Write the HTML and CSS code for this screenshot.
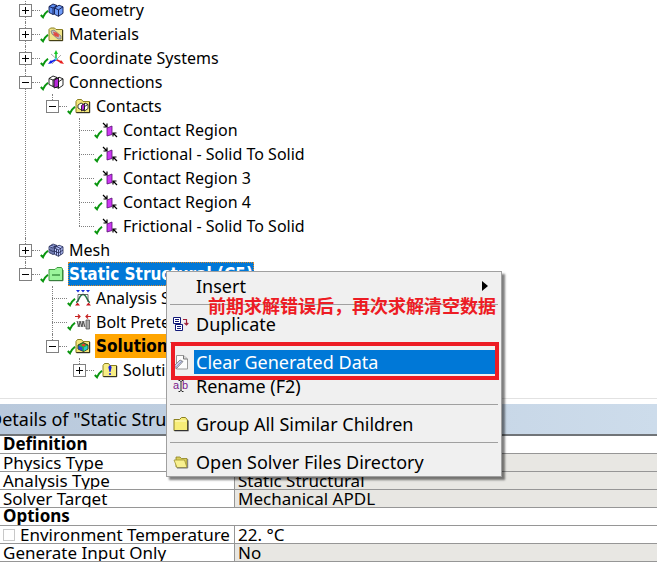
FILE: index.html
```html
<!DOCTYPE html>
<html lang="en">
<head>
<meta charset="utf-8">
<title>Outline</title>
<link rel="stylesheet" href="styles.css">
</head>
<body>
<svg class="sprite" aria-hidden="true">
  <symbol id="check" viewBox="0 0 9 9"><path d="M.8 5 3 7.200C4 4.800 5.800 2.400 8 .8" fill="none" stroke="#0a960f" stroke-width="2"/></symbol>
  <symbol id="geometry" viewBox="0 0 16 16"><g stroke="#10184a" stroke-width=".9" stroke-linejoin="round"><path d="M1 4.500 5 2l4 1.500v7L5 12.500 1 10.500z" fill="#5c8cf0"/><path d="M1 4.500 5 6l4-2.500M5 6v6.500" fill="none"/><path d="M6.500 6 11 3.200l4 1.600v6.500l-4.500 3-4-2z" fill="#6f9cf8"/><path d="m6.500 6 4 1.800L15 4.800M10.500 7.800v6.500" fill="none"/></g></symbol>
  <symbol id="materials" viewBox="0 0 16 16"><path d="M1 3.500 2.500 2h4L8 3.500h6.500v11H1z" fill="#f0e48a" stroke="#8b8020"/><path d="M1.500 14.700h13.200V4" fill="none" stroke="#333010"/><path d="m3 5 3-1 7 6v3h-3L4 8z" fill="#bdbdbd" stroke="#777" stroke-width=".7"/><path d="m5.500 6 5 5M7.500 6.500l3.500 3M5.500 8l3 2.500" stroke="#e14b42" stroke-width="1.200"/></symbol>
  <symbol id="axes" viewBox="0 0 16 16"><path d="m3 4 10 9M13 5l-9 9" stroke="#999" stroke-width=".8"/><path d="M8 9V2" stroke="#18b828" stroke-width="1.500"/><path d="M8 0 6 4h4z" fill="#18c828"/><path d="M8 9.500 2 12.500" stroke="#1020e8" stroke-width="1.600"/><path d="m0 14 3-4 1.500 3z" fill="#1020e8"/><path d="m8 9.500 6 3" stroke="#e82020" stroke-width="1.600"/><path d="m16 14-4.500-1L13 10z" fill="#e82020"/><circle cx="8" cy="9" r="1.300" fill="#42c8d8"/></symbol>
  <symbol id="connections" viewBox="0 0 16 16"><g stroke="#111" stroke-width=".9" stroke-linejoin="round"><path d="M1 4.500 5 2l4 1.500v7L5 12.500 1 10.500z" fill="#fff"/><path d="M1 4.500 5 6l4-2.500M5 6v6.500" fill="none"/><path d="M6.500 6 11 3.200l4 1.600v6.500l-4.500 3-4-2z" fill="#fff"/><path d="m6 6 4.500-2v8.500L6 14z" fill="#b62ad8"/><path d="m10.500 7.800L15 4.800M10.500 7.800v6.500" fill="none"/></g></symbol>
  <symbol id="contacts" viewBox="0 0 16 16"><path d="M1 3.500 2.500 1.500h4L8 3.500h6.500v11H1z" fill="#f4e77a" stroke="#8b8020"/><path d="M1.500 14.700h13.200V4" fill="none" stroke="#222"/><g stroke="#111" stroke-width=".8"><path d="m3 7 3-2 2 1v4l-2.500 1.500L3 10z" fill="#fff"/><path d="M7.500 7.500 10 5l3 1.500v4L9.500 13l-2-1z" fill="#fff"/><path d="m6.500 7.500 3-2V11l-3 2z" fill="#b62ad8"/><path d="m9.500 8.500 3.500-2M9.500 8.500V13"/></g></symbol>
  <symbol id="region" viewBox="0 0 16 16"><path d="m5 6 5-2v8.500L5 14z" fill="#cc38f2" stroke="#571070" stroke-width=".8"/><path d="m1 1 3.500 3.500M5 1.500V5H1.500M15 15l-3.500-3.500M11 14.500V11h3.500" fill="none" stroke="#000" stroke-width="1.200"/></symbol>
  <symbol id="mesh" viewBox="0 0 16 16"><g stroke="#20264f" stroke-width=".8"><path d="M1 4.500 5 2l4 1.500v7L5 12.500 1 10.500z" fill="#aab8f6"/><path d="M1 4.500 5 6l4-2.500M5 6v6.500M1 7.500l4 2 2-1M3 3.200l4 1.600M3 5.500v6M7 3v4" fill="none"/><path d="M6.500 6 11 3.200l4 1.600v6.500l-4.500 3-4-2z" fill="#b9c5ff"/><path d="m6.500 6 4 1.800L15 4.800M10.500 7.800v6.500M6.500 9l4 2L15 8M8.500 7v6.300M12.700 6v7M8.500 4.600l4 1.800" fill="none"/></g></symbol>
  <symbol id="static" viewBox="0 0 16 16"><path d="M1 3.500h6L9 1.500h4.500L14.500 3v11.500H1z" fill="#9bf59b" stroke="#3f9b3f"/><path d="M1.500 14.700h13.500V4" fill="none" stroke="#35783a"/><path d="M4 9h8" stroke="#287d30" stroke-width="1.200"/></symbol>
  <symbol id="settings" viewBox="0 0 16 16"><path d="M1 0h4L3 2.500zM6 0h4L8 2.500zM11 0h4l-2 2.500z" fill="#1530d8"/><path d="M0 15.500h5l-2.500-3zM11 15.500h5l-2.500-3z" fill="#c81820"/><path d="M1 12.500C4 12 4 4.500 8 4.500s4 7.500 7 8" fill="none" stroke="#247848" stroke-width="1.500"/><path d="M3 12V4.500h10V12" fill="none" stroke="#444" stroke-width=".8"/></symbol>
  <symbol id="bolt" viewBox="0 0 16 16"><path d="M0 2.500h5M3 .5l2 2-2 2M16 2.500h-5M13 .5l-2 2 2 2" fill="none" stroke="#c62222" stroke-width="1.200"/><path d="M2 7h8v6H2z" fill="#ccc"/><path d="m2 7 2 6 1-6 2 6 1-6 2 6" fill="none" stroke="#555"/><path d="M11 6h3.500v9H11z" fill="#aaa" stroke="#555" stroke-width=".8"/></symbol>
  <symbol id="solution" viewBox="0 0 16 16"><path d="M1 3.500 2.500 1.500h4L8 3.500h6.500v11H1z" fill="#f4e77a" stroke="#8b8020"/><path d="M1.500 14.700h13.200V4" fill="none" stroke="#222"/><path d="m3 7 5-2.500L13 7v4l-4.500 2.500L3 11z" fill="#28b440" stroke="#111" stroke-width=".8"/><path d="m3.500 7.500 4 2V13l-4-2z" fill="#2448e0"/><path d="m9 9.500 3.500-2V11L9 13z" fill="#28c8d0"/><path d="m6 7 2.500-1.500L11 7 8.500 8.500z" fill="#f03828"/></symbol>
  <symbol id="info" viewBox="0 0 16 16"><path d="M1 3.500 2.500 1.500h4L8 3.500h6.500v11H1z" fill="#f8ee84" stroke="#8b8020"/><path d="M1.500 14.700h13.200V4" fill="none" stroke="#222"/><path d="M6.300 5 8 3l1.700 2L8.500 10h-1z" fill="#1520e0"/><circle cx="8" cy="12" r="1.100" fill="#1520e0"/></symbol>
  <symbol id="duplicate" viewBox="0 0 16 16"><g fill="#fff" stroke="#101878"><path d="M.5 1.500h7v6h-7zM2.500 8.500h7v6h-7z"/><path d="M2 3.500h4M2 5.500h4M4 10.500h4M4 12.500h4"/></g><path d="M10 3.500h3.500V9M11.500 7l2 2 1.800-2" fill="none" stroke="#a02038" stroke-width="1.200"/></symbol>
  <symbol id="clear" viewBox="0 0 16 16"><path d="M3.500 1.500h7l4 3.500v10h-11z" fill="#fdfdfd" stroke="#999"/><path d="M10.500 1.500V5h4" fill="#ddd" stroke="#777"/><path d="m1 12 6-6 3 1.500L4 14H1z" fill="#c9cfee" stroke="#777" stroke-width=".8"/><path d="m1 12 2.500.5L9 7" fill="none" stroke="#8288a8" stroke-width=".7"/></symbol>
  <symbol id="rename" viewBox="0 0 16 16"><text x="0" y="11" class="glyph">a</text><text x="9" y="11" class="glyph">b</text><path d="M5.500 2.500H7l1 1 1-1h1.500M8 3v10M5.500 13.500H7l1-1 1 1h1.500" fill="none" stroke="#222"/></symbol>
  <symbol id="group" viewBox="0 0 16 16"><path d="M1 3.500h5.500L8.500 1.500h4L14.500 4v10.500H1z" fill="#f7ed78" stroke="#8b8020"/><path d="M1.500 14.700h13.500V4.500" fill="none" stroke="#333" stroke-width="1.200"/><path d="M2 5h11" stroke="#fffbc8"/></symbol>
  <symbol id="open" viewBox="0 0 16 16"><path d="M3 13V3h4l1.500 1.500H14v9z" fill="#d9cd5a" stroke="#8b8020" stroke-width=".8"/><path d="M1 6h10.500L14 13.500H4z" fill="#f8f090" stroke="#a09430" stroke-width=".8"/><path d="M14.700 5v9H4" fill="none" stroke="#777"/></symbol>
</svg>

<main class="app">
  <nav class="outline" aria-label="Outline">
    <ul class="tree">
      <li><div class="row"><button class="toggle plus" aria-label="Expand"></button><i class="link"></i><svg class="check"><use href="#check"/></svg><svg class="icon"><use href="#geometry"/></svg><span class="label">Geometry</span></div></li>
      <li><div class="row"><button class="toggle plus" aria-label="Expand"></button><i class="link"></i><svg class="check"><use href="#check"/></svg><svg class="icon"><use href="#materials"/></svg><span class="label">Materials</span></div></li>
      <li><div class="row"><button class="toggle plus" aria-label="Expand"></button><i class="link"></i><svg class="check"><use href="#check"/></svg><svg class="icon"><use href="#axes"/></svg><span class="label">Coordinate Systems</span></div></li>
      <li><div class="row"><button class="toggle" aria-label="Collapse"></button><i class="link"></i><svg class="check"><use href="#check"/></svg><svg class="icon"><use href="#connections"/></svg><span class="label">Connections</span></div>
        <ul>
          <li><div class="row"><button class="toggle" aria-label="Collapse"></button><i class="link"></i><svg class="check"><use href="#check"/></svg><svg class="icon"><use href="#contacts"/></svg><span class="label">Contacts</span></div>
            <ul>
              <li><div class="row"><i class="link leaf"></i><svg class="check"><use href="#check"/></svg><svg class="icon"><use href="#region"/></svg><span class="label">Contact Region</span></div></li>
              <li><div class="row"><i class="link leaf"></i><svg class="check"><use href="#check"/></svg><svg class="icon"><use href="#region"/></svg><span class="label">Frictional - Solid To Solid</span></div></li>
              <li><div class="row"><i class="link leaf"></i><svg class="check"><use href="#check"/></svg><svg class="icon"><use href="#region"/></svg><span class="label">Contact Region 3</span></div></li>
              <li><div class="row"><i class="link leaf"></i><svg class="check"><use href="#check"/></svg><svg class="icon"><use href="#region"/></svg><span class="label">Contact Region 4</span></div></li>
              <li><div class="row"><i class="link leaf"></i><svg class="check"><use href="#check"/></svg><svg class="icon"><use href="#region"/></svg><span class="label">Frictional - Solid To Solid</span></div></li>
            </ul>
          </li>
        </ul>
      </li>
      <li><div class="row"><button class="toggle plus" aria-label="Expand"></button><i class="link"></i><svg class="check"><use href="#check"/></svg><svg class="icon"><use href="#mesh"/></svg><span class="label">Mesh</span></div></li>
      <li><div class="row"><button class="toggle" aria-label="Collapse"></button><i class="link"></i><svg class="check"><use href="#check"/></svg><svg class="icon"><use href="#static"/></svg><span class="label selected">Static Structural (C5)</span></div>
        <ul>
          <li><div class="row"><i class="link leaf"></i><svg class="check"><use href="#check"/></svg><svg class="icon"><use href="#settings"/></svg><span class="label">Analysis Settings</span></div></li>
          <li><div class="row"><i class="link leaf"></i><svg class="check"><use href="#check"/></svg><svg class="icon"><use href="#bolt"/></svg><span class="label">Bolt Pretension</span></div></li>
          <li><div class="row"><button class="toggle" aria-label="Collapse"></button><i class="link"></i><svg class="check"><use href="#check"/></svg><svg class="icon"><use href="#solution"/></svg><span class="label active">Solution (C6)</span></div>
            <ul>
              <li><div class="row"><button class="toggle plus" aria-label="Expand"></button><i class="link"></i><svg class="check"><use href="#check"/></svg><svg class="icon"><use href="#info"/></svg><span class="label">Solution Info</span></div></li>
            </ul>
          </li>
        </ul>
      </li>
    </ul>
  </nav>

  <section class="details">
    <h2 class="details-title">Details of "Static Structural (C5)"</h2>
    <table class="props">
      <colgroup><col class="name-col"><col></colgroup>
      <tbody>
        <tr><th colspan="2">Definition</th></tr>
        <tr><td>Physics Type</td><td class="fixed">Structural</td></tr>
        <tr><td>Analysis Type</td><td class="fixed">Static Structural</td></tr>
        <tr><td>Solver Target</td><td class="fixed">Mechanical APDL</td></tr>
        <tr><th colspan="2">Options</th></tr>
        <tr><td><div class="option"><input type="checkbox" id="env"><label for="env">Environment Temperature</label></div></td><td>22. °C</td></tr>
        <tr><td>Generate Input Only</td><td class="fixed">No</td></tr>
      </tbody>
    </table>
  </section>

  <div class="menu" role="menu">
    <button class="item" role="menuitem"><span class="slot"></span><span class="text">Insert</span><span class="arrow"></span></button>
    <hr>
    <button class="item" role="menuitem"><span class="slot"><svg class="icon"><use href="#duplicate"/></svg></span><span class="text">Duplicate</span></button>
    <hr>
    <button class="item current" role="menuitem"><span class="slot"><svg class="icon"><use href="#clear"/></svg></span><span class="text">Clear Generated Data</span></button>
    <button class="item" role="menuitem"><span class="slot"><svg class="icon"><use href="#rename"/></svg></span><span class="text">Rename (F2)</span></button>
    <hr>
    <button class="item" role="menuitem"><span class="slot"><svg class="icon"><use href="#group"/></svg></span><span class="text">Group All Similar Children</span></button>
    <hr>
    <button class="item" role="menuitem"><span class="slot"><svg class="icon"><use href="#open"/></svg></span><span class="text">Open Solver Files Directory</span></button>
    <p class="note" lang="zh-CN">前期求解错误后，再次求解清空数据</p>
    <div class="frame"></div>
  </div>
</main>
</body>
</html>
```
FILE: styles.css
```css
* {
  box-sizing: border-box;
}

body {
  margin: 0;
  background: #fff;
  color: #000;
  font-family: "Noto Sans", sans-serif;
}

.sprite {
  position: absolute;
  width: 0;
  height: 0;
}

.glyph {
  font: 11px "Liberation Sans", sans-serif;
  fill: #7a1a8c;
}

.app {
  position: relative;
  overflow: hidden;
}

/* Outline tree */
.outline {
  margin-top: -2px;
  padding-bottom: 16px;
  border-bottom: 1px solid #e2e2e2;
  font-size: 16px;
  line-height: 22px;
}

.tree,
.tree ul {
  margin: 0;
  padding: 0;
  list-style: none;
}

.tree {
  padding-left: 19px;
}

.tree ul {
  padding-left: 27px;
}

.tree li {
  position: relative;
}

.tree li::before {
  content: "";
  position: absolute;
  top: 0;
  bottom: 0;
  left: 6px;
  border-left: 1px dotted #808080;
}

.tree li:last-child::before {
  bottom: auto;
  height: 12px;
}

.row {
  position: relative;
  display: flex;
  align-items: center;
  height: 24px;
  white-space: nowrap;
}

.toggle {
  width: 13px;
  height: 13px;
  padding: 0;
  border: 1px solid #808080;
  background: linear-gradient(#000, #000) center / 7px 1px no-repeat, #fff;
}

.toggle.plus {
  background: linear-gradient(#000, #000) center / 7px 1px no-repeat, linear-gradient(#000, #000) center / 1px 7px no-repeat, #fff;
}

.link {
  width: 8px;
  border-top: 1px dotted #808080;
}

.link.leaf {
  width: 15px;
  margin-left: 6px;
}

.check {
  width: 9px;
  height: 9px;
  margin: 8px -1px 0 0;
}

.icon {
  display: block;
  width: 16px;
  height: 16px;
}

.label {
  margin-left: 4px;
  padding: 0 1px;
  border: 1px solid transparent;
  border-left-width: 0;
}

.label.selected,
.label.active {
  font-family: "DejaVu Sans Condensed", "DejaVu Sans", sans-serif;
  font-size: 17px;
  font-weight: bold;
}

.label.selected {
  border: 1px dotted #e08a28;
  padding: 0;
  background: #0078d7;
  color: #fff;
}

.label.active {
  border-color: #ffa500;
  background: #ffa500;
}

/* Details panel */
.details {
  margin-top: 5px;
}

.details-title {
  height: 32px;
  margin: 0;
  border-bottom: 2px solid #707478;
  background: linear-gradient(90deg, #b9c9dc, #cddceb);
  font-size: 18px;
  font-weight: normal;
  line-height: 30px;
  text-indent: -11px;
  white-space: nowrap;
}

.props {
  width: 100%;
  border-collapse: separate;
  border-spacing: 0;
  table-layout: fixed;
  font-size: 17px;
  line-height: 17px;
}

.name-col {
  width: 235px;
}

.props th,
.props td {
  height: 18px;
  padding: 0 3px;
  border-bottom: 1px solid #969696;
  overflow: hidden;
  text-align: left;
  vertical-align: top;
  white-space: nowrap;
}

.props th {
  line-height: 15px;
}

.props td:first-child {
  border-right: 1px solid #969696;
}

.props .fixed {
  background: #e8e7e3;
}

.option {
  display: flex;
  align-items: center;
  gap: 5px;
}

.option input {
  appearance: none;
  flex: none;
  width: 12px;
  height: 12px;
  margin: 0;
  border: 1px solid #c8c8c8;
  background: #fff;
}

/* Context menu */
.menu {
  position: absolute;
  top: 271px;
  left: 166px;
  width: 336px;
  padding: 2px 3px;
  border: 1px solid #a0a0a0;
  background: #f0f0f0;
  box-shadow: 3px 3px 2px rgba(0, 0, 0, 0.5);
}

.menu hr {
  height: 1px;
  margin: 6px 0 7px;
  border: 0;
  background: #a0a0a0;
}

.item {
  display: flex;
  align-items: center;
  width: 100%;
  height: 24px;
  padding: 0 3px 0 0;
  border: 0;
  background: none;
  font: 18px/24px "Noto Sans", sans-serif;
  color: #000;
  text-align: left;
  white-space: nowrap;
}

.slot {
  flex: none;
  width: 24px;
  padding-left: 3px;
}

.text {
  flex: 1;
  padding-left: 2px;
}

.current .text {
  background: #0078d7;
  color: #fff;
}

.arrow {
  margin-right: 7px;
  border: 5px solid transparent;
  border-left: 6px solid #000;
  border-right: 0;
}

.note {
  position: absolute;
  top: 20px;
  left: 41px;
  margin: 0;
  color: #ed1c24;
  font: bold 18px/26px "Noto Sans CJK SC", sans-serif;
  white-space: nowrap;
}

.frame {
  position: absolute;
  top: 70px;
  right: 2px;
  left: 4px;
  height: 38px;
  border: 4px solid #ed1c24;
}
```
